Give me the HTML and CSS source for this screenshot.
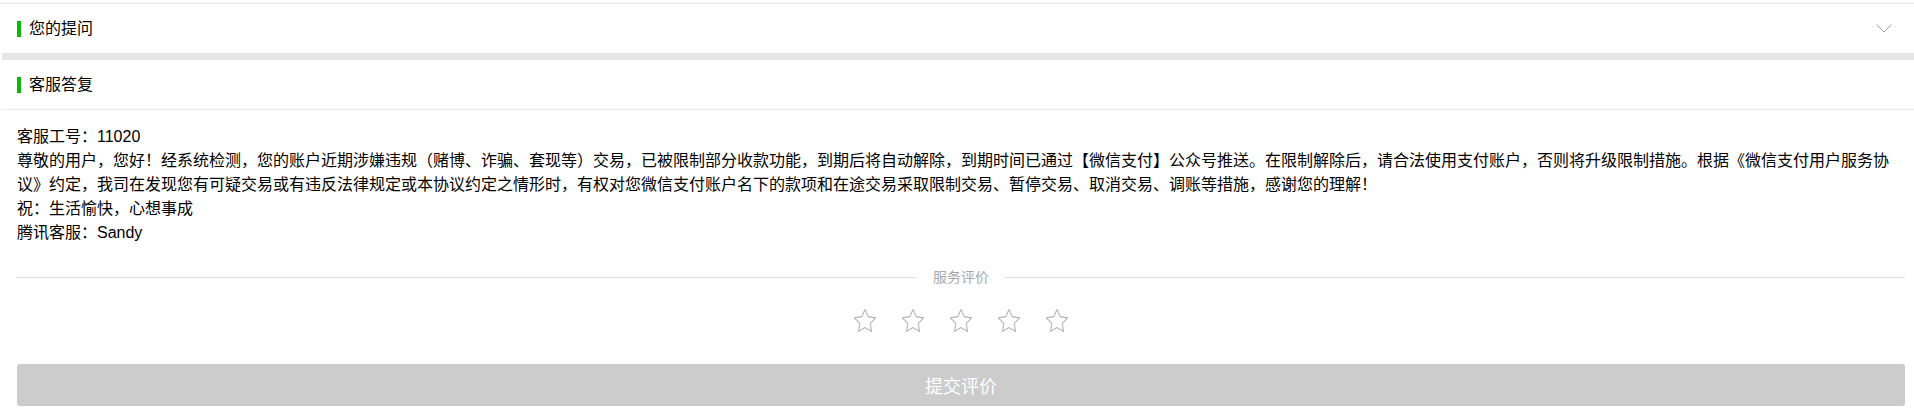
FILE: index.html
```html
<!DOCTYPE html>
<html lang="zh-CN">
<head>
<meta charset="utf-8">
<title>客服答复</title>
<link rel="stylesheet" href="styles.css">
</head>
<body>
<div class="page">
  <section class="panel panel-question">
    <div class="panel-head">
      <span class="mark"></span>
      <span class="title">您的提问</span>
      <svg class="chevron" width="16" height="9" viewBox="0 0 16 9"><polyline points="0.5,0.5 8,8 15.5,0.5" fill="none" stroke="#a0a0a0" stroke-width="1"/></svg>
    </div>
  </section>
  <section class="panel panel-answer">
    <div class="panel-head head-border">
      <span class="mark"></span>
      <span class="title">客服答复</span>
    </div>
    <div class="answer">
      <p>客服工号：11020</p>
      <p>尊敬的用户，您好！经系统检测，您的账户近期涉嫌违规（赌博、诈骗、套现等）交易，已被限制部分收款功能，到期后将自动解除，到期时间已通过【微信支付】公众号推送。在限制解除后，请合法使用支付账户，否则将升级限制措施。根据《微信支付用户服务协议》约定，我司在发现您有可疑交易或有违反法律规定或本协议约定之情形时，有权对您微信支付账户名下的款项和在途交易采取限制交易、暂停交易、取消交易、调账等措施，感谢您的理解！</p>
      <p>祝：生活愉快，心想事成</p>
      <p>腾讯客服：Sandy</p>
    </div>
    <div class="rate">
      <div class="divider"><span class="line"></span><span class="label">服务评价</span><span class="line"></span></div>
      <div class="stars">
        <svg class="star" width="22" height="23" viewBox="1.6 1.6 20.8 20" preserveAspectRatio="none"><polygon points="12,2 15.09,8.26 22,9.27 17,14.14 18.18,21.02 12,17.77 5.82,21.02 7,14.14 2,9.27 8.91,8.26" fill="none" stroke="#b4b4b4" stroke-width="1" stroke-linejoin="miter"/></svg>
        <svg class="star" width="22" height="23" viewBox="1.6 1.6 20.8 20" preserveAspectRatio="none"><polygon points="12,2 15.09,8.26 22,9.27 17,14.14 18.18,21.02 12,17.77 5.82,21.02 7,14.14 2,9.27 8.91,8.26" fill="none" stroke="#b4b4b4" stroke-width="1" stroke-linejoin="miter"/></svg>
        <svg class="star" width="22" height="23" viewBox="1.6 1.6 20.8 20" preserveAspectRatio="none"><polygon points="12,2 15.09,8.26 22,9.27 17,14.14 18.18,21.02 12,17.77 5.82,21.02 7,14.14 2,9.27 8.91,8.26" fill="none" stroke="#b4b4b4" stroke-width="1" stroke-linejoin="miter"/></svg>
        <svg class="star" width="22" height="23" viewBox="1.6 1.6 20.8 20" preserveAspectRatio="none"><polygon points="12,2 15.09,8.26 22,9.27 17,14.14 18.18,21.02 12,17.77 5.82,21.02 7,14.14 2,9.27 8.91,8.26" fill="none" stroke="#b4b4b4" stroke-width="1" stroke-linejoin="miter"/></svg>
        <svg class="star" width="22" height="23" viewBox="1.6 1.6 20.8 20" preserveAspectRatio="none"><polygon points="12,2 15.09,8.26 22,9.27 17,14.14 18.18,21.02 12,17.77 5.82,21.02 7,14.14 2,9.27 8.91,8.26" fill="none" stroke="#b4b4b4" stroke-width="1" stroke-linejoin="miter"/></svg>
      </div>
      <button class="submit" type="button">提交评价</button>
    </div>
  </section>
</div>
</body>
</html>
```
FILE: styles.css
```css
html, body {
  margin: 0;
  padding: 0;
  background: #fff;
}
body {
  font-family: "Liberation Sans", "Noto Sans CJK SC", sans-serif;
  font-size: 16px;
  color: #000;
}
.page {
  padding-top: 3px;
}
.panel-question {
  border-top: 1px solid #e6e6e6;
}
.panel-answer {
  margin-left: 2px;
  border-top: 7px solid #e6e6e6;
}
.panel-head {
  height: 49px;
  display: flex;
  align-items: center;
  padding: 0 22px 0 17px;
}
.panel-answer .panel-head {
  padding-left: 15px;
}
.head-border {
  border-bottom: 1px solid #ebebeb;
}
.mark {
  width: 4px;
  height: 16px;
  background: #09bb07;
  margin-right: 8px;
}
.title {
  font-size: 16px;
  line-height: 20px;
  flex: 1;
}
.chevron {
  display: block;
}
.answer {
  padding: 15px 9px 0 15px;
}
.answer p {
  margin: 0;
  line-height: 24px;
}
.rate {
  padding: 0 9px 0 15px;
}
.divider {
  display: flex;
  align-items: center;
  margin-top: 22px;
  height: 20px;
}
.divider .line {
  flex: 1;
  height: 1px;
  background: #dcdcdc;
}
.divider .label {
  font-size: 14px;
  color: #a8a8a8;
  padding: 0 16px;
  line-height: 20px;
}
.stars {
  display: flex;
  justify-content: center;
  gap: 26px;
  margin-top: 22px;
  height: 24px;
}
.star {
  display: block;
}
.submit {
  display: block;
  width: 100%;
  height: 42px;
  margin-top: 31px;
  border: 0;
  border-radius: 3px;
  background: #cccccc;
  color: #fff;
  font-family: "Liberation Sans", "Noto Sans CJK SC", sans-serif;
  font-size: 18px;
  padding: 0;
}
```
